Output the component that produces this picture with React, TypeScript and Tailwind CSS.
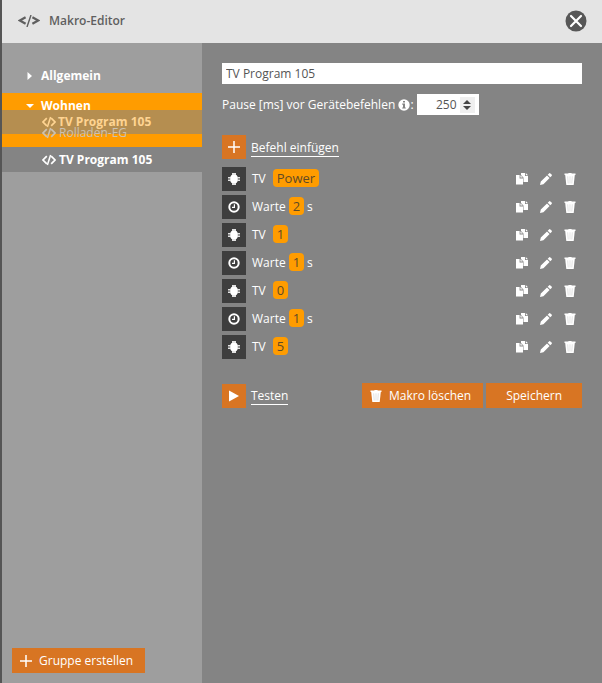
import { useState, type ReactNode } from "react";

type Command = { id: number; kind: "device" | "wait"; value: string };

const commands: Command[] = [
  { id: 1, kind: "device", value: "Power" },
  { id: 2, kind: "wait", value: "2" },
  { id: 3, kind: "device", value: "1" },
  { id: 4, kind: "wait", value: "1" },
  { id: 5, kind: "device", value: "0" },
  { id: 6, kind: "wait", value: "1" },
  { id: 7, kind: "device", value: "5" },
];

const HeaderCodeIcon = () => (
  <svg viewBox="0 0 22 12" className="h-3 w-[22px]" fill="none" stroke="currentColor">
    <path d="M7.600 2.200 1.800 5.500l5.800 3.300M14.400 2.200l5.800 3.300-5.800 3.300" strokeWidth="2.200" />
    <path d="M13 0 9 12" strokeWidth="1.400" />
  </svg>
);

const CodeIcon = () => (
  <svg viewBox="0 0 14 12" className="h-3 w-[14px] shrink-0" fill="none" stroke="currentColor">
    <path d="M4.800 2.200 1 6l3.800 3.800M9.200 2.200 13 6 9.200 9.800" strokeWidth="1.700" />
    <path d="M8.600 1 5.400 11" strokeWidth="1.500" />
  </svg>
);

const ChipIcon = () => (
  <svg viewBox="0 0 12 12" className="h-3 w-3" fill="currentColor">
    <path d="M3.500 2h5l1.300 2v4L8.500 10h-5L2.200 8V4z" />
    <path d="M4 0h4v2H4zM4 10h4v2H4z" fillOpacity=".85" />
    <path d="M0 4h2.500v1.500H0zM0 6.500h2.500V8H0zM9.500 4H12v1.500H9.500zM9.500 6.500H12V8H9.500z" fillOpacity=".85" />
  </svg>
);

const ClockIcon = () => (
  <svg viewBox="0 0 12 12" className="h-3 w-3" fill="none" stroke="currentColor">
    <circle cx="6" cy="6" r="4.700" strokeWidth="2" />
    <path d="M6.400 3.200v3.200H4" strokeWidth="1.200" />
  </svg>
);

const CopyIcon = () => (
  <svg viewBox="0 0 12 12" className="h-3 w-3" fill="currentColor">
    <path d="M5 0h4v3h3v6H7.500V4.500L5 2z" />
    <path d="M9.800 0 12 2.200H9.800z" />
    <path d="M0 2h3.600v3.400H7V11.500H0z" />
    <path d="M4.400 2.200 6.800 4.600H4.400z" />
  </svg>
);

const PencilIcon = () => (
  <svg viewBox="0 0 12 12" className="h-3 w-3" fill="currentColor">
    <path d="M0 12 .8 8.600 7 2.400 9.600 5 3.400 11.200zM7.700 1.700 9 .4q.7-.7 1.400 0l1.200 1.200q.7.7 0 1.400l-1.300 1.300z" />
  </svg>
);

const TrashIcon = () => (
  <svg viewBox="0 0 12 12" className="h-3 w-3" fill="currentColor">
    <path d="M.5.5h3.700L4.600 0h2.800l.4.5h3.700V2H.5z" />
    <path d="M1.200 2h9.600L9.700 12H2.300z" />
    <path d="M3.700 3.300 4.200 10.500M6 3.300v7.200M8.300 3.300 7.800 10.500" stroke="#848484" strokeOpacity=".3" strokeWidth=".8" />
  </svg>
);

const PlusIcon = () => (
  <svg viewBox="0 0 12 12" className="h-3 w-3" stroke="currentColor" strokeWidth="1.500">
    <path d="M6 0v12M0 6h12" />
  </svg>
);

const InfoIcon = () => (
  <svg viewBox="0 0 12 12" className="h-3 w-3" fill="currentColor">
    <circle cx="6" cy="6" r="5.700" />
    <path d="M5 2h2v1.600H5zM4.200 4.600H7v3.800h.8v1.200H4.200V8.400H5V5.800h-.8z" fill="#848484" />
  </svg>
);

const IconButton = ({ label, children }: { label: string; children: ReactNode }) => (
  <button type="button" aria-label={label} className="flex h-6 w-6 items-center justify-center">
    {children}
  </button>
);

const Badge = ({ children }: { children: ReactNode }) => (
  <span className="mb-0.5 rounded bg-[#ff9c00] px-1 text-[13px] leading-[18px] font-normal text-[#5f4a26]">
    {children}
  </span>
);

const CommandRow = ({ command }: { command: Command }) => (
  <li className="flex h-6 items-center">
    <span className="flex h-6 w-6 items-center justify-center bg-[#3e3e3e]">
      {command.kind === "device" ? <ChipIcon /> : <ClockIcon />}
    </span>
    {command.kind === "device" ? (
      <span className="ml-1.5 flex flex-1 items-center gap-[7px]">
        TV <Badge>{command.value}</Badge>
      </span>
    ) : (
      <span className="ml-1.5 flex flex-1 items-center gap-[3px]">
        Warte <Badge>{command.value}</Badge> s
      </span>
    )}
    <IconButton label="Kopieren"><CopyIcon /></IconButton>
    <IconButton label="Bearbeiten"><PencilIcon /></IconButton>
    <IconButton label="Entfernen"><TrashIcon /></IconButton>
  </li>
);

const Sidebar = () => (
  <aside className="flex w-[200px] shrink-0 flex-col bg-[#9e9e9e] pt-5">
    <nav className="relative font-bold">
      <button type="button" className="mb-[5px] flex h-[25px] w-full items-center">
        <svg viewBox="0 0 8 8" className="mr-[7px] ml-6 h-2 w-2" fill="currentColor">
          <path d="M1.500 0 6 4 1.500 8z" />
        </svg>
        Allgemein
      </button>
      <div className="bg-[#ff9c00]">
        <button type="button" className="flex h-[25px] w-full items-center">
          <svg viewBox="0 0 8 8" className="mr-[7px] ml-6 h-2 w-2" fill="currentColor">
            <path d="M0 2h8L4 6z" />
          </svg>
          Wohnen
        </button>
        {/* sits above the dragged entry, so it stays readable */}
        <a href="#rolladen-eg" className="relative z-10 flex h-[29px] items-center gap-[3px] pl-10 font-medium text-[#ccc2b2]">
          <CodeIcon />
          Rolladen-EG
        </a>
      </div>
      <a href="#tv-program-105" className="flex h-[25px] items-center gap-[3px] bg-[#848484] pl-10">
        <CodeIcon />
        TV Program 105
      </a>
      {/* entry being dragged */}
      <div className="absolute inset-x-0 top-[47px] flex h-6 items-center gap-0.5 bg-[#b58e50] pl-10 text-[#ffd492]">
        <CodeIcon />
        TV Program 105
      </div>
    </nav>
    <div className="mt-auto px-2.5 pb-2.5">
      <button type="button" className="flex h-[25px] items-center gap-[7px] bg-[#d87523] px-2 pr-3">
        <PlusIcon />
        Gruppe erstellen
      </button>
    </div>
  </aside>
);

const App = () => {
  const [name, setName] = useState("TV Program 105");
  const [pause, setPause] = useState(250);

  return (
    <div className="flex min-h-screen flex-col border-l-2 border-[#555] bg-[#848484] font-['Open_Sans',sans-serif] text-[12px] leading-[18px] font-medium text-white">
      <header className="flex h-[43px] items-center bg-[#e4e4e4] pr-[15px] pb-0.5 pl-4 text-[#5f5f5f]">
        <HeaderCodeIcon />
        <h1 className="ml-[9px] flex-1 font-semibold">Makro-Editor</h1>
        <button type="button" aria-label="Schließen">
          <svg viewBox="0 0 22 22" className="h-[22px] w-[22px]">
            <circle cx="11" cy="11" r="10.500" fill="#575757" />
            <path d="m6 6 10 10M16 6 6 16" stroke="#fff" strokeWidth="2.200" strokeLinecap="round" />
          </svg>
        </button>
      </header>

      <div className="flex flex-1">
        <Sidebar />
        <main className="min-w-0 flex-1 p-5">
          <input
            aria-label="Name"
            value={name}
            onChange={(e) => setName(e.target.value)}
            className="block h-[21px] w-full bg-white px-1 font-normal text-[#555]"
          />

          <div className="mt-2.5 flex h-[21px] items-center">
            <label htmlFor="pause" className="flex items-center">
              Pause [ms] vor Gerätebefehlen&nbsp;
              <InfoIcon />:
            </label>
            <div className="ml-[3px] flex h-[21px] w-[62px] items-center bg-white pr-1 text-[#444]">
              <input
                id="pause"
                type="number"
                value={pause}
                onChange={(e) => setPause(Number(e.target.value))}
                className="min-w-0 flex-1 pr-[3px] text-right font-normal text-[#555] [appearance:textfield] [&::-webkit-inner-spin-button]:appearance-none"
              />
              <div className="flex w-[15px] flex-col bg-[#efefef]">
                <button type="button" aria-label="Mehr" onClick={() => setPause(pause + 1)} className="flex h-2 items-end justify-center pb-px">
                  <svg viewBox="0 0 8 4" className="h-1 w-2" fill="currentColor"><path d="M0 4 4 0l4 4z" /></svg>
                </button>
                <button type="button" aria-label="Weniger" onClick={() => setPause(pause - 1)} className="flex h-2 items-start justify-center pt-px">
                  <svg viewBox="0 0 8 4" className="h-1 w-2" fill="currentColor"><path d="M0 0h8L4 4z" /></svg>
                </button>
              </div>
            </div>
          </div>

          <button type="button" className="mt-5 flex h-6 items-center gap-[5px]">
            <span className="flex h-6 w-6 items-center justify-center bg-[#d87523]"><PlusIcon /></span>
            <span className="border-b border-white pt-0.5 leading-4">Befehl einfügen</span>
          </button>

          <ul className="mt-2 flex flex-col gap-1">
            {commands.map((command) => (
              <CommandRow key={command.id} command={command} />
            ))}
          </ul>

          <div className="mt-6 flex items-center">
            <button type="button" className="flex h-6 items-center gap-[5px]">
              <span className="flex h-6 w-6 items-center justify-center bg-[#d87523]">
                <svg viewBox="0 0 12 12" className="h-3 w-3" fill="currentColor"><path d="M1 0.500 11 6 1 11.500z" /></svg>
              </span>
              <span className="border-b border-white pt-0.5 leading-4">Testen</span>
            </button>
            <button type="button" className="ml-auto flex h-[25px] items-center gap-[7px] bg-[#d87523] px-2 pr-3">
              <TrashIcon />
              Makro löschen
            </button>
            <button type="button" className="ml-[3px] h-[25px] bg-[#d87523] px-5">
              Speichern
            </button>
          </div>
        </main>
      </div>
    </div>
  );
};

export default App;
